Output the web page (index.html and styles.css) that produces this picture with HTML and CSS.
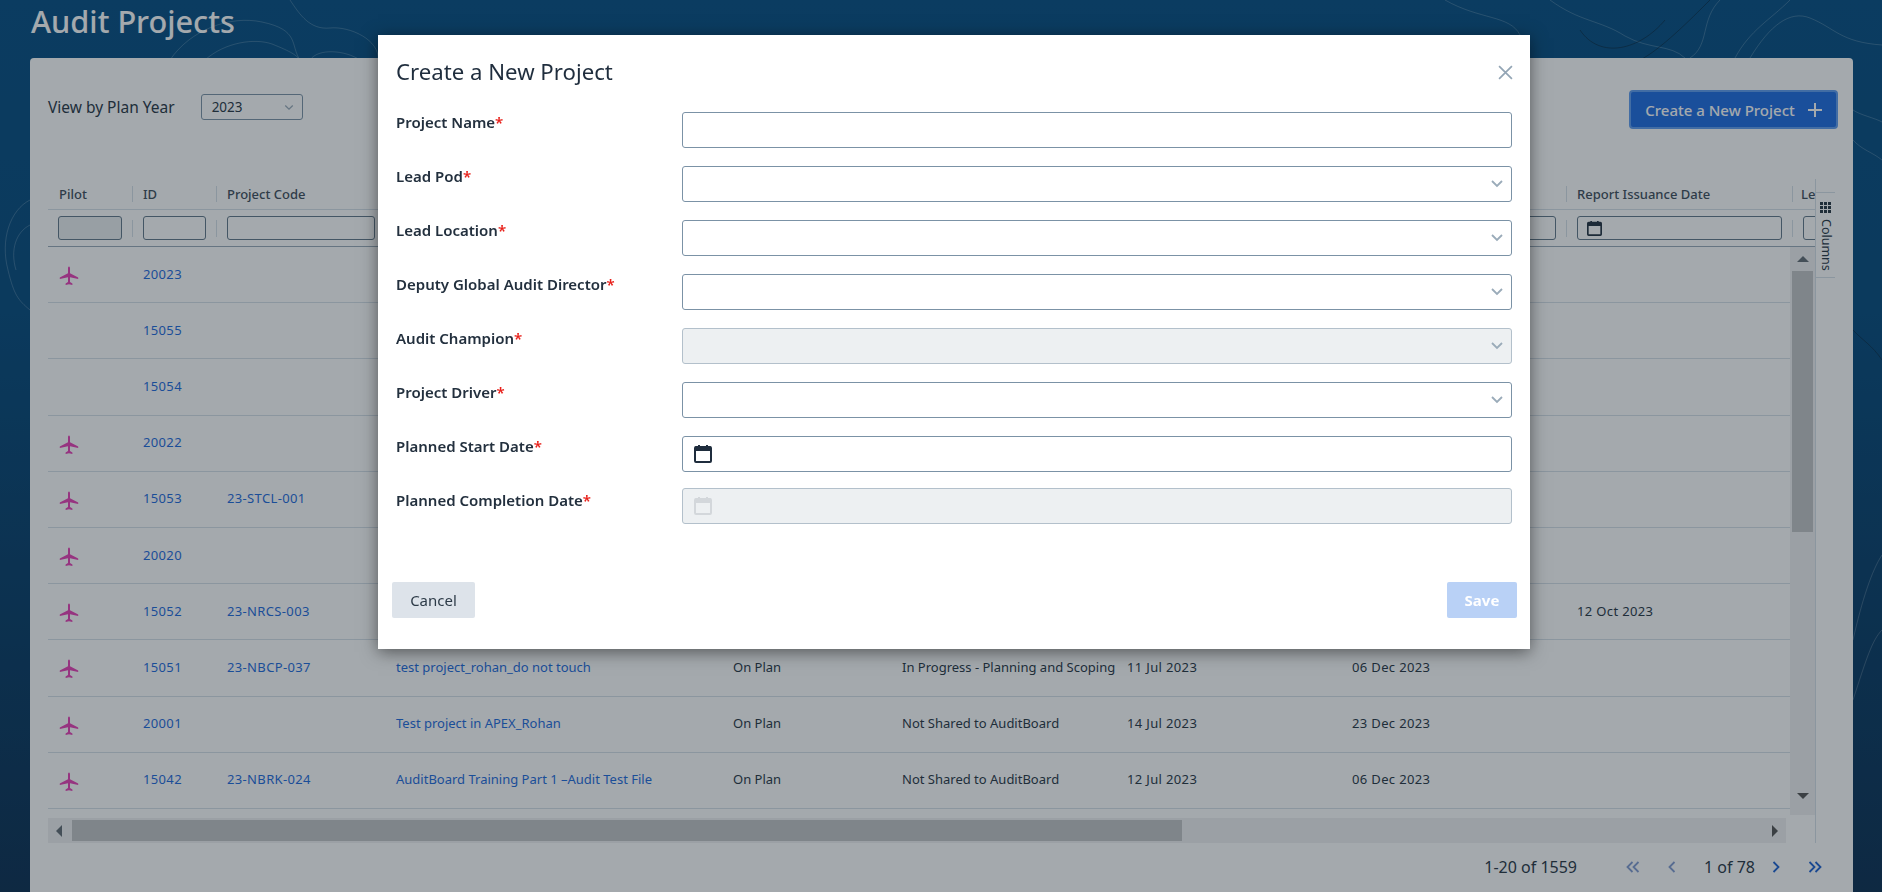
FILE: index.html
```html
<!DOCTYPE html>
<html lang="en">
<head>
    <meta charset="UTF-8">
    <title>Audit Projects</title>
    <link rel="stylesheet" href="styles.css">
</head>
<body>
    <svg class="topo" viewBox="0 0 1882 892" fill="none">
        <g stroke="#ffffff" stroke-opacity="0.2" stroke-width="1">
            <path d="M170 60 C190 30 230 15 262 22 C300 30 290 45 300 60"/>
            <path d="M205 60 C225 42 255 38 272 44 C292 52 296 55 300 60"/>
            <path d="M290 0 C300 15 310 30 330 28 C350 26 380 40 378 60"/>
            <path d="M310 60 C318 48 345 50 360 60"/>
            <path d="M1445 0 C1480 20 1510 15 1520 35"/>
            <path d="M1550 0 C1580 22 1600 20 1625 36 C1650 50 1670 44 1685 58"/>
            <path d="M1720 0 C1700 20 1710 45 1690 58"/>
            <path d="M1750 58 C1770 25 1790 10 1810 18 C1835 28 1840 42 1882 45"/>
            <path d="M1790 0 C1770 20 1750 30 1735 58"/>
            <path d="M1853 110 C1860 115 1875 118 1882 122"/>
            <path d="M1853 140 C1862 150 1872 152 1882 160"/>
            <path d="M1853 640 C1862 600 1872 570 1882 555"/>
            <path d="M1853 700 C1866 660 1872 640 1882 630"/>
            <path d="M30 200 C10 210 0 240 8 270 C14 295 18 300 30 310"/>
            <path d="M30 225 C16 232 10 250 16 270"/>
        </g>
        <g stroke="#041c30" stroke-opacity="0.55" stroke-width="1">
            <path d="M1580 30 C1600 60 1640 50 1665 20"/>
            <path d="M1640 60 C1660 50 1690 20 1710 0"/>
            <path d="M1853 330 C1862 340 1872 345 1882 360"/>
        </g>
    </svg>

    <div class="page">
        <h1 class="page-title">Audit Projects</h1>

        <div class="panel">
            <div class="toolbar">
                <div class="plan-year">
                    <span class="plan-year-label">View by Plan Year</span>
                    <div class="year-select">
                        <span>2023</span>
                        <svg class="chev-small" viewBox="0 0 12 8"><path d="M1.5 1.5 6 6l4.5-4.5"/></svg>
                    </div>
                </div>
                <button class="btn-create">Create a New Project
                    <svg class="plus" viewBox="0 0 14 14"><path d="M7 0v14M0 7h14"/></svg>
                </button>
            </div>

            <div class="grid-wrap">
                <div class="grid">
                    <div class="grid-cols head-row">
                        <div class="hcell first">Pilot</div>
                        <div class="hcell">ID</div>
                        <div class="hcell">Project Code</div>
                        <div class="hcell"></div>
                        <div class="hcell"></div>
                        <div class="hcell"></div>
                        <div class="hcell"></div>
                        <div class="hcell"></div>
                        <div class="hcell">Report Issuance Date</div>
                        <div class="hcell last">Le</div>
                    </div>
                    <div class="grid-cols filter-row">
                        <div class="fcell first"><div class="finput filled"></div></div>
                        <div class="fcell"><div class="finput"></div></div>
                        <div class="fcell"><div class="finput"></div></div>
                        <div class="fcell"><div class="finput"></div></div>
                        <div class="fcell"><div class="finput"></div></div>
                        <div class="fcell"><div class="finput"></div></div>
                        <div class="fcell"><div class="finput"></div></div>
                        <div class="fcell"><div class="finput"></div></div>
                        <div class="fcell"><div class="finput date">
                            <svg class="cal cal-small" viewBox="0 0 18 18"><use href="#cal"/></svg>
                        </div></div>
                        <div class="fcell"><div class="finput"></div></div>
                    </div>

                    <div class="grid-body">
                        <div class="rows">
                            <div class="grid-cols row">
                                <div class="cell"><svg class="plane" viewBox="0 0 20 20"><use href="#plane"/></svg></div>
                                <a class="cell link num">20023</a>
                            </div>
                            <div class="grid-cols row">
                                <div class="cell"></div>
                                <a class="cell link num">15055</a>
                            </div>
                            <div class="grid-cols row">
                                <div class="cell"></div>
                                <a class="cell link num">15054</a>
                            </div>
                            <div class="grid-cols row">
                                <div class="cell"><svg class="plane" viewBox="0 0 20 20"><use href="#plane"/></svg></div>
                                <a class="cell link num">20022</a>
                            </div>
                            <div class="grid-cols row">
                                <div class="cell"><svg class="plane" viewBox="0 0 20 20"><use href="#plane"/></svg></div>
                                <a class="cell link num">15053</a>
                                <a class="cell link num">23-STCL-001</a>
                            </div>
                            <div class="grid-cols row">
                                <div class="cell"><svg class="plane" viewBox="0 0 20 20"><use href="#plane"/></svg></div>
                                <a class="cell link num">20020</a>
                            </div>
                            <div class="grid-cols row">
                                <div class="cell"><svg class="plane" viewBox="0 0 20 20"><use href="#plane"/></svg></div>
                                <a class="cell link num">15052</a>
                                <a class="cell link num">23-NRCS-003</a>
                                <div class="cell"></div>
                                <div class="cell"></div>
                                <div class="cell"></div>
                                <div class="cell"></div>
                                <div class="cell"></div>
                                <div class="cell num">12 Oct 2023</div>
                            </div>
                            <div class="grid-cols row">
                                <div class="cell"><svg class="plane" viewBox="0 0 20 20"><use href="#plane"/></svg></div>
                                <a class="cell link num">15051</a>
                                <a class="cell link num">23-NBCP-037</a>
                                <a class="cell link">test project_rohan_do not touch</a>
                                <div class="cell">On Plan</div>
                                <div class="cell">In Progress - Planning and Scoping</div>
                                <div class="cell num">11 Jul 2023</div>
                                <div class="cell num">06 Dec 2023</div>
                            </div>
                            <div class="grid-cols row">
                                <div class="cell"><svg class="plane" viewBox="0 0 20 20"><use href="#plane"/></svg></div>
                                <a class="cell link num">20001</a>
                                <div class="cell"></div>
                                <a class="cell link">Test project in APEX_Rohan</a>
                                <div class="cell">On Plan</div>
                                <div class="cell">Not Shared to AuditBoard</div>
                                <div class="cell num">14 Jul 2023</div>
                                <div class="cell num">23 Dec 2023</div>
                            </div>
                            <div class="grid-cols row">
                                <div class="cell"><svg class="plane" viewBox="0 0 20 20"><use href="#plane"/></svg></div>
                                <a class="cell link num">15042</a>
                                <a class="cell link num">23-NBRK-024</a>
                                <a class="cell link">AuditBoard Training Part 1 –Audit Test File</a>
                                <div class="cell">On Plan</div>
                                <div class="cell">Not Shared to AuditBoard</div>
                                <div class="cell num">12 Jul 2023</div>
                                <div class="cell num">06 Dec 2023</div>
                            </div>
                        </div>
                        <div class="vscroll">
                            <span class="arrow up"></span>
                            <div class="vthumb"></div>
                            <span class="arrow down"></span>
                        </div>
                    </div>

                    <div class="hscroll">
                        <span class="arrow left"></span>
                        <div class="hthumb"></div>
                        <span class="arrow right"></span>
                    </div>
                </div>

                <div class="side-bar">
                    <div class="columns-tab">
                        <svg class="dots" viewBox="0 0 11 11">
                            <path d="M0 0h3v3H0zM4 0h3v3H4zM8 0h3v3H8zM0 4h3v3H0zM4 4h3v3H4zM8 4h3v3H8zM0 8h3v3H0zM4 8h3v3H4zM8 8h3v3H8z"/>
                        </svg>
                        <span class="columns-text">Columns</span>
                    </div>
                </div>
            </div>

            <div class="pager">
                <span class="pager-count">1-20 of 1559</span>
                <svg class="pg pg-first off" viewBox="0 0 14 12"><path d="M6.5 1 1.5 6l5 5M12.5 1l-5 5 5 5"/></svg>
                <svg class="pg pg-prev off" viewBox="0 0 8 12"><path d="M6.5 1 1.5 6l5 5"/></svg>
                <span class="pager-page">1 of 78</span>
                <svg class="pg pg-next" viewBox="0 0 8 12"><path d="M1.5 1l5 5-5 5"/></svg>
                <svg class="pg pg-last" viewBox="0 0 14 12"><path d="M1.5 1l5 5-5 5M7.5 1l5 5-5 5"/></svg>
            </div>
        </div>
    </div>

    <div class="overlay"></div>

    <div class="modal">
        <div class="modal-head">
            <h2 class="modal-title">Create a New Project</h2>
            <svg class="close" viewBox="0 0 14 14"><path d="M1 1l12 12M13 1 1 13"/></svg>
        </div>

        <div class="form">
            <label class="form-label">Project Name<span class="req">*</span></label>
            <div class="field"></div>

            <label class="form-label">Lead Pod<span class="req">*</span></label>
            <div class="field select">
                <svg class="chev" viewBox="0 0 12 8"><path d="M1 1l5 5 5-5"/></svg>
            </div>

            <label class="form-label">Lead Location<span class="req">*</span></label>
            <div class="field select">
                <svg class="chev" viewBox="0 0 12 8"><path d="M1 1l5 5 5-5"/></svg>
            </div>

            <label class="form-label">Deputy Global Audit Director<span class="req">*</span></label>
            <div class="field select">
                <svg class="chev" viewBox="0 0 12 8"><path d="M1 1l5 5 5-5"/></svg>
            </div>

            <label class="form-label">Audit Champion<span class="req">*</span></label>
            <div class="field select disabled">
                <svg class="chev" viewBox="0 0 12 8"><path d="M1 1l5 5 5-5"/></svg>
            </div>

            <label class="form-label">Project Driver<span class="req">*</span></label>
            <div class="field select">
                <svg class="chev" viewBox="0 0 12 8"><path d="M1 1l5 5 5-5"/></svg>
            </div>

            <label class="form-label">Planned Start Date<span class="req">*</span></label>
            <div class="field">
                <svg class="cal" viewBox="0 0 18 18"><use href="#cal"/></svg>
            </div>

            <label class="form-label">Planned Completion Date<span class="req">*</span></label>
            <div class="field disabled tight">
                <svg class="cal" viewBox="0 0 18 18"><use href="#cal"/></svg>
            </div>
        </div>

        <div class="modal-foot">
            <button class="btn-cancel">Cancel</button>
            <button class="btn-save">Save</button>
        </div>
    </div>

    <svg class="defs" width="0" height="0">
        <defs>
            <g id="plane">
                <path d="M10 0.5c.7 0 1 .9 1 1.8V7.2l8.2 4.3v1.6L11 11.3v4.6l2.4 1.7v1.4L10 18.2 6.6 19v-1.4L9 15.9v-4.6L.8 13.1v-1.6L9 7.2V2.3c0-.9.3-1.8 1-1.8z"/>
            </g>
            <g id="cal">
                <path class="cal-band" d="M1 1.5h16V6H1z M4 0h2v2H4z M12 0h2v2h-2z"/>
                <rect class="cal-box" x="1" y="2" width="16" height="15" rx="1"/>
            </g>
        </defs>
    </svg>
</body>
</html>
```
FILE: styles.css
```css
* {
    box-sizing: border-box;
}
html, body {
    height: 100%;
}
body {
    margin: 0;
    height: 892px;
    overflow: hidden;
    font-family: "Noto Sans", Arial, sans-serif;
    color: #24323f;
    background: linear-gradient(180deg, #004a80 0%, #00467a 35%, #052a4e 100%);
}
h1, h2 {
    margin: 0;
    font-weight: 500;
}
button {
    font-family: inherit;
    border: none;
    cursor: pointer;
}

.topo {
    position: absolute;
    left: 0;
    top: 0;
    width: 1882px;
    height: 892px;
}
.defs {
    position: absolute;
}

.page {
    position: relative;
    height: 892px;
    padding: 0 29px 0 30px;
    display: flex;
    flex-direction: column;
}
.page-title {
    height: 58px;
    padding: 2px 0 0 1px;
    font-size: 30.7px;
    line-height: 38px;
    color: #ffffff;
}

.panel {
    flex: 1;
    background: #ffffff;
    border-radius: 4px 4px 0 0;
    padding: 32px 15px 0 18px;
    display: flex;
    flex-direction: column;
}
.toolbar {
    display: flex;
    justify-content: space-between;
    align-items: flex-start;
    height: 39px;
}
.plan-year {
    display: flex;
    align-items: center;
    gap: 26px;
    margin-top: 4px;
}
.plan-year-label {
    font-size: 15.5px;
}
.year-select {
    width: 102px;
    height: 26px;
    border: 1px solid #7b92a6;
    border-radius: 3px;
    padding: 0 8px 0 10px;
    display: flex;
    justify-content: space-between;
    align-items: center;
    font-size: 13.5px;
}
.chev-small {
    width: 10px;
    height: 7px;
    fill: none;
    stroke: #9aabb9;
    stroke-width: 1.6;
}
.btn-create {
    width: 209px;
    height: 39px;
    padding-bottom: 1px;
    background: #1969e2;
    border: 2px solid #5c9bf0;
    border-radius: 4px;
    color: #ffffff;
    font-size: 15px;
    font-weight: 500;
    display: flex;
    align-items: center;
    justify-content: center;
    gap: 13px;
}
.plus {
    width: 14px;
    height: 14px;
    fill: none;
    stroke: #ffffff;
    stroke-width: 2;
}

.grid-wrap {
    display: flex;
    margin-top: 50px;
    height: 664px;
    margin-right: 3px;
}
.grid {
    width: 1767px;
    overflow: hidden;
    display: flex;
    flex-direction: column;
}
.grid-cols {
    display: grid;
    grid-template-columns: 84px 84px 169px 337px 169px 225px 225px 225px 226px 225px;
    width: 1969px;
}

.head-row {
    height: 31px;
    border-bottom: 1px solid #d5dfe8;
    align-items: center;
    font-size: 13px;
    font-weight: 500;
    color: #3b4a58;
}
.hcell {
    height: 16px;
    line-height: 16px;
    padding-left: 10px;
    border-left: 1px solid #d5dfe8;
    white-space: nowrap;
}
.hcell.first {
    border-left: none;
    padding-left: 11px;
}
.hcell.last {
    padding-left: 8px;
}
.filter-row {
    height: 37px;
    border-bottom: 1px solid #98a9b8;
    align-items: center;
}
.fcell {
    height: 17px;
    padding: 0 10px;
    border-left: 1px solid #d5dfe8;
    display: flex;
    align-items: center;
}
.fcell.first {
    border-left: none;
}
.finput {
    flex: 1;
    height: 24px;
    border: 1px solid #5f7587;
    border-radius: 3px;
    display: flex;
    align-items: center;
    padding-left: 9px;
}
.finput.filled {
    background: #ebeef0;
}

.grid-body {
    display: flex;
    height: 568px;
}
.rows {
    width: 1742px;
    overflow: hidden;
}
.row {
    height: 56.2px;
    border-bottom: 1px solid #d5dfe8;
    align-items: center;
    font-size: 13px;
}
.cell {
    padding: 0 0 2px 11px;
    white-space: nowrap;
}
.num {
    letter-spacing: 0.35px;
}
.link {
    color: #1a68dc;
}
.plane {
    display: block;
    width: 20px;
    height: 20px;
    margin-top: 5px;
    fill: #e83cb4;
}

.vscroll {
    width: 25px;
    background: #f0f1f2;
    padding-top: 9px;
    display: flex;
    flex-direction: column;
    align-items: center;
}
.vthumb {
    width: 21px;
    height: 261px;
    margin-top: 9px;
    background: #c1c3c5;
}
.hscroll {
    margin-top: 3px;
    width: 1738px;
    height: 25px;
    background: #f0f1f2;
    display: flex;
    align-items: center;
    padding-left: 8px;
}
.hthumb {
    width: 1110px;
    height: 21px;
    margin-left: 10px;
    background: #c1c3c5;
}
.arrow {
    display: block;
    width: 0;
    height: 0;
    border-style: solid;
    border-color: transparent;
}
.arrow.up {
    border-width: 0 6px 6px;
    border-bottom-color: #606a72;
}
.arrow.down {
    border-width: 6px 6px 0;
    border-top-color: #505050;
    margin-top: 261px;
}
.arrow.left {
    border-width: 6px 6px 6px 0;
    border-right-color: #606a72;
}
.arrow.right {
    border-width: 6px 0 6px 6px;
    border-left-color: #505050;
    margin-left: 590px;
}

.side-bar {
    width: 20px;
    border-left: 1px solid #d5dfe8;
    padding-top: 13px;
}
.columns-tab {
    height: 86px;
    border-top: 1px solid #d5dfe8;
    border-bottom: 1px solid #d5dfe8;
    display: flex;
    flex-direction: column;
    align-items: center;
    padding-top: 9px;
    gap: 6px;
}
.dots {
    width: 11px;
    height: 11px;
    flex-shrink: 0;
    fill: #24323f;
}
.columns-text {
    writing-mode: vertical-rl;
    font-size: 12.5px;
    line-height: 14px;
}

.pager {
    display: flex;
    align-items: center;
    justify-content: flex-end;
    padding: 14px 16px 0 0;
    font-size: 16px;
    line-height: 20px;
}
.pager-count {
    margin-right: 49px;
}
.pg {
    fill: none;
    stroke: #1a5fd0;
    stroke-width: 1.8;
    height: 12px;
}
.pg.off {
    stroke: #7f9ad0;
}
.pg-first, .pg-last {
    width: 14px;
}
.pg-prev, .pg-next {
    width: 8px;
}
.pg-first {
    margin-right: 28px;
}
.pg-prev {
    margin-right: 28px;
}
.pager-page {
    margin-right: 17px;
}
.pg-next {
    margin-right: 28px;
}

.overlay {
    position: fixed;
    inset: 0;
    background: rgba(27, 40, 50, 0.4);
}

.modal {
    position: fixed;
    left: 378px;
    top: 35px;
    width: 1152px;
    height: 614px;
    background: #ffffff;
    box-shadow: 0 3px 16px rgba(0, 0, 0, 0.5);
    display: flex;
    flex-direction: column;
}
.modal-head {
    display: flex;
    justify-content: space-between;
    align-items: center;
    height: 74px;
    margin-bottom: 3px;
    padding: 0 17px 0 18px;
}
.modal-title {
    font-size: 22.2px;
    line-height: 30px;
    color: #1f2d3d;
    font-weight: 400;
}
.close {
    width: 15px;
    height: 15px;
    fill: none;
    stroke: #93a5b5;
    stroke-width: 1.6;
}

.form {
    display: grid;
    grid-template-columns: 286px 830px;
    grid-auto-rows: 36px;
    row-gap: 18px;
    padding-left: 18px;
}
.form-label {
    font-size: 15px;
    font-weight: 600;
    line-height: 20px;
    color: #23303e;
}
.req {
    color: #e8201a;
}
.tight {
    margin-top: -2px;
}
.field {
    height: 36px;
    border: 1px solid #7b92a6;
    border-radius: 3px;
    display: flex;
    align-items: center;
    padding: 0 8px 0 11px;
}
.field.select {
    justify-content: flex-end;
}
.field.disabled {
    background: #edf0f2;
    border-color: #b3c0cb;
}
.chev {
    width: 12px;
    height: 8px;
    fill: none;
    stroke: #9aabb9;
    stroke-width: 1.8;
}
.cal {
    width: 18px;
    height: 18px;
}
.cal-small {
    width: 15px;
    height: 15px;
}
.cal-band {
    fill: #1f2d3d;
}
.cal-box {
    fill: none;
    stroke: #1f2d3d;
    stroke-width: 2;
}
.field.disabled .cal {
    opacity: 0.12;
}

.modal-foot {
    margin-top: auto;
    padding: 0 13px 31px 14px;
    display: flex;
    justify-content: space-between;
}
.btn-cancel, .btn-save {
    height: 36px;
    border-radius: 2px;
    font-size: 15px;
}
.btn-cancel {
    width: 83px;
    background: #dde3ea;
    color: #2d3b48;
}
.btn-save {
    width: 70px;
    background: #b9d1f6;
    color: #ffffff;
    font-weight: 700;
}
```
